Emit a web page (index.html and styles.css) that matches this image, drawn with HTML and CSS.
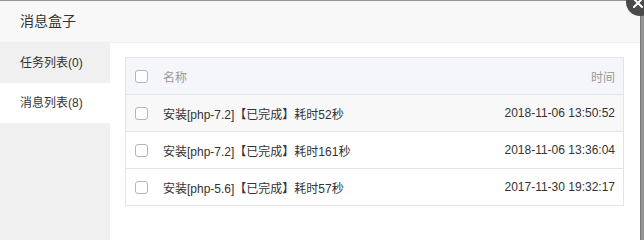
FILE: index.html
```html
<!DOCTYPE html>
<html lang="zh-CN">
<head>
<meta charset="utf-8">
<title>消息盒子</title>
<link rel="stylesheet" href="styles.css">
</head>
<body>
<div class="dialog">
  <div class="title">消息盒子</div>
  <div class="body">
    <div class="side">
      <div class="tab">任务列表(0)</div>
      <div class="tab active">消息列表(8)</div>
    </div>
    <div class="main">
      <div class="tbl">
        <div class="row head">
          <span class="cb"></span>
          <span class="name">名称</span>
          <span class="time">时间</span>
        </div>
        <div class="row hover">
          <span class="cb"></span>
          <span class="name">安装[php-7.2]【已完成】耗时52秒</span>
          <span class="time">2018-11-06 13:50:52</span>
        </div>
        <div class="row">
          <span class="cb"></span>
          <span class="name">安装[php-7.2]【已完成】耗时161秒</span>
          <span class="time">2018-11-06 13:36:04</span>
        </div>
        <div class="row">
          <span class="cb"></span>
          <span class="name">安装[php-5.6]【已完成】耗时57秒</span>
          <span class="time">2017-11-30 19:32:17</span>
        </div>
      </div>
    </div>
  </div>
  <div class="close"><svg width="10" height="10" viewBox="0 0 10 10"><path d="M1 1L9 9M9 1L1 9" stroke="#fff" stroke-width="2" stroke-linecap="round"/></svg></div>
</div>
</body>
</html>
```
FILE: styles.css
```css
html, body {
  margin: 0;
  padding: 0;
}
html {
  background: #959595;
}
body {
  width: 644px;
  min-height: 100vh;
  overflow: hidden;
  background: #959595;
  font-family: "Liberation Sans", "Noto Sans CJK SC", sans-serif;
  font-size: 12px;
  color: #333;
}
.dialog {
  position: relative;
  width: 640px;
  min-height: calc(100vh - 1px);
  margin-top: 1px;
  background: #fff;
  display: flex;
  flex-direction: column;
  border-right: 1px solid #7a7a7a;
  box-sizing: content-box;
}
.title {
  height: 41px;
  line-height: 41px;
  padding-left: 20px;
  background: #f8f8f8;
  border-bottom: 1px solid #eee;
  font-size: 14px;
  color: #333;
  flex: none;
}
.body {
  flex: 1;
  display: flex;
}
.side {
  width: 110px;
  background: #f0f0f0;
  flex: none;
}
.tab {
  height: 40px;
  line-height: 40px;
  padding-left: 20px;
  color: #333;
}
.tab.active {
  background: #fff;
}
.main {
  flex: 1;
  padding: 14px 16px 0 15px;
}
.tbl {
  border: 1px solid #e4e4e4;
}
.row {
  display: flex;
  align-items: center;
  height: 36px;
  border-top: 1px solid #e4e4e4;
  padding: 0 8px 0 8px;
}
.row.head {
  border-top: none;
  background: #f5f6fa;
  color: #999;
}
.row.hover {
  background: #f8f8f8;
}
.cb {
  width: 11px;
  height: 11px;
  border: 1px solid #b5b5b5;
  border-radius: 3px;
  background: #fff;
  flex: none;
  margin-left: 1px;
}
.name {
  margin-left: 15px;
  flex: 1;
  white-space: nowrap;
}
.time {
  white-space: nowrap;
}
.close {
  position: absolute;
  left: 626px;
  top: -13px;
  width: 28px;
  height: 28px;
  border-radius: 50%;
  background: #4a4a4a;
  display: flex;
  align-items: flex-end;
  justify-content: center;
  box-sizing: border-box;
}
.close svg {
  margin: 0 5px 8px 0;
}
```
